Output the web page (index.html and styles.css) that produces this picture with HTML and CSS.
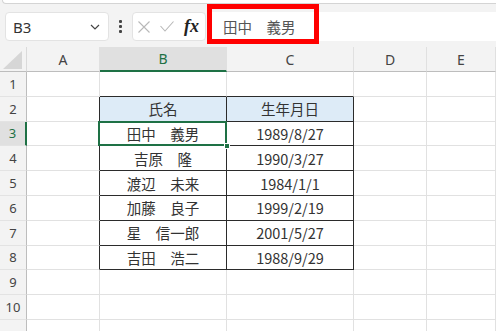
FILE: index.html
```html
<!DOCTYPE html>
<html lang="ja">
<head>
    <meta charset="UTF-8">
    <meta name="viewport" content="width=device-width, initial-scale=1.0">
    <title>Sheet</title>
    <link rel="stylesheet" href="styles.css">
</head>
<body>
    <div class="ribbon"></div>

    <div class="toolbar">
        <div class="namebox">
            <span>B3</span>
            <svg width="10" height="6" viewBox="0 0 10 6"><path d="M1 1 L5 5 L9 1" fill="none" stroke="#444" stroke-width="1.2"/></svg>
        </div>
        <div class="dots"><i></i><i></i><i></i></div>
        <div class="fxbox">
            <svg width="12" height="12" viewBox="0 0 12 12"><path d="M0.5 0.5 L11.5 11.5 M11.5 0.5 L0.5 11.5" stroke="#b8b8b8" stroke-width="1.1"/></svg>
            <svg width="14" height="11" viewBox="0 0 14 11"><path d="M0.5 5 L5 10 L13.5 0.5" fill="none" stroke="#b8b8b8" stroke-width="1.1"/></svg>
            <span class="fx">fx</span>
        </div>
        <div class="formula">
            <span>田中　義男</span>
            <div class="mark"></div>
        </div>
    </div>

    <div class="sheet">
        <div class="corner"><svg width="20" height="18" viewBox="0 0 20 18"><polygon points="19,0 19,18 0,18" fill="#d6d6d6"/></svg></div>
        <div class="ch">A</div>
        <div class="ch sel">B</div>
        <div class="ch">C</div>
        <div class="ch">D</div>
        <div class="ch">E</div>

        <div class="rh">1</div>
        <div class="c"></div><div class="c tb"></div><div class="c tb"></div><div class="c"></div><div class="c"></div>

        <div class="rh">2</div>
        <div class="c tr"></div><div class="c t head">氏名</div><div class="c t head">生年月日</div><div class="c"></div><div class="c"></div>

        <div class="rh sel">3</div>
        <div class="c tr"></div><div class="c t cur">田中　義男</div><div class="c t">1989/8/27</div><div class="c"></div><div class="c"></div>

        <div class="rh">4</div>
        <div class="c tr"></div><div class="c t">吉原　隆</div><div class="c t">1990/3/27</div><div class="c"></div><div class="c"></div>

        <div class="rh">5</div>
        <div class="c tr"></div><div class="c t">渡辺　未来</div><div class="c t">1984/1/1</div><div class="c"></div><div class="c"></div>

        <div class="rh">6</div>
        <div class="c tr"></div><div class="c t">加藤　良子</div><div class="c t">1999/2/19</div><div class="c"></div><div class="c"></div>

        <div class="rh">7</div>
        <div class="c tr"></div><div class="c t">星　信一郎</div><div class="c t">2001/5/27</div><div class="c"></div><div class="c"></div>

        <div class="rh">8</div>
        <div class="c tr"></div><div class="c t">吉田　浩二</div><div class="c t">1988/9/29</div><div class="c"></div><div class="c"></div>

        <div class="rh">9</div>
        <div class="c"></div><div class="c"></div><div class="c"></div><div class="c"></div><div class="c"></div>

        <div class="rh">10</div>
        <div class="c"></div><div class="c"></div><div class="c"></div><div class="c"></div><div class="c"></div>

        <div class="rh"></div>
        <div class="c"></div><div class="c"></div><div class="c"></div><div class="c"></div><div class="c"></div>
    </div>
</body>
</html>
```

FILE: styles.css
```css
body {
    margin: 0;
    padding: 0;
    background-color: #f3f3f3;
    font-family: "Noto Sans", "Noto Sans CJK JP", sans-serif;
    color: #333;
    overflow: hidden;
}

.ribbon {
    height: 3px;
    margin-left: 2px;
    background-color: #fff;
    border-bottom: 1px solid #d4d4d4;
    border-left: 1px solid #d4d4d4;
    border-bottom-left-radius: 4px;
}

.toolbar {
    display: flex;
    height: 29px;
    padding: 8px 0 6px 5px;
}

.namebox {
    width: 104px;
    box-sizing: border-box;
    display: flex;
    align-items: center;
    justify-content: space-between;
    padding: 0 8px 0 7px;
    background-color: #fff;
    border: 1px solid #e3e3e3;
    border-radius: 4px;
    font-size: 15px;
    color: #333;
}

.dots {
    width: 23px;
    display: flex;
    flex-direction: column;
    align-items: center;
    justify-content: center;
    gap: 2px;
}

.dots i {
    width: 3px;
    height: 3px;
    background-color: #444;
    border-radius: 1px;
}

.fxbox {
    width: 74px;
    box-sizing: border-box;
    display: flex;
    align-items: center;
    gap: 10px;
    padding-left: 5px;
    background-color: #fff;
    border: 1px solid #e3e3e3;
    border-radius: 4px;
}

.fx {
    font-family: "Liberation Serif", serif;
    font-style: italic;
    font-weight: bold;
    font-size: 18px;
    color: #222;
    margin-left: 0;
}

.formula {
    flex: 1;
    position: relative;
    margin-left: 2px;
    display: flex;
    align-items: center;
    padding-left: 15px;
    background-color: #fff;
    font-family: "Noto Sans CJK JP", sans-serif;
    font-size: 14.5px;
    color: #555;
}

.mark {
    position: absolute;
    left: -1px;
    top: -8px;
    width: 112px;
    height: 40px;
    box-sizing: border-box;
    border: 5px solid #ff0000;
}

.sheet {
    display: grid;
    grid-template-columns: 27px 73px 127px 127px 73px 1fr;
    grid-template-rows: 25px repeat(11, 24.8px);
    background-color: #fff;
}

.corner {
    display: flex;
    align-items: flex-end;
    justify-content: flex-end;
    padding: 0 3px 2px 0;
    background-color: #f3f3f3;
    border-right: 1px solid #dadada;
    border-bottom: 1px solid #bdbdbd;
}

.ch {
    display: flex;
    align-items: center;
    justify-content: center;
    background-color: #f3f3f3;
    border-right: 1px solid #e0e0e0;
    border-bottom: 1px solid #bdbdbd;
    font-size: 14px;
    color: #444;
}

.ch.sel {
    background-color: #e0e0e0;
    border-bottom: 2px solid #1e7145;
    color: #1e7145;
}

.rh {
    display: flex;
    align-items: center;
    justify-content: center;
    background-color: #f3f3f3;
    border-right: 1px solid #bdbdbd;
    border-bottom: 1px solid #e3e3e3;
    font-size: 13px;
    color: #444;
}

.rh.sel {
    background-color: #e0e0e0;
    border-right: 2px solid #1e7145;
    color: #1e7145;
}

.c {
    box-sizing: border-box;
    display: flex;
    align-items: center;
    justify-content: center;
    border-right: 1px solid #e1e1e1;
    border-bottom: 1px solid #e1e1e1;
    font-family: "Noto Sans CJK JP", sans-serif;
    font-size: 14.5px;
    color: #333;
}

.c.tb {
    border-bottom-color: #2b2b2b;
}

.c.tr {
    border-right-color: #2b2b2b;
}

.c.t {
    border-right-color: #2b2b2b;
    border-bottom-color: #2b2b2b;
}

.c.head {
    background-color: #ddebf7;
}

.c.cur {
    position: relative;
}

.c.cur::after {
    content: "";
    position: absolute;
    left: -2px;
    top: -1px;
    right: -1px;
    bottom: -1px;
    border: 2px solid #1e7145;
}

.c.cur::before {
    content: "";
    position: absolute;
    right: -4px;
    bottom: -4px;
    width: 6px;
    height: 6px;
    background-color: #1e7145;
    border: 1px solid #fff;
    box-sizing: border-box;
    z-index: 1;
}
```
